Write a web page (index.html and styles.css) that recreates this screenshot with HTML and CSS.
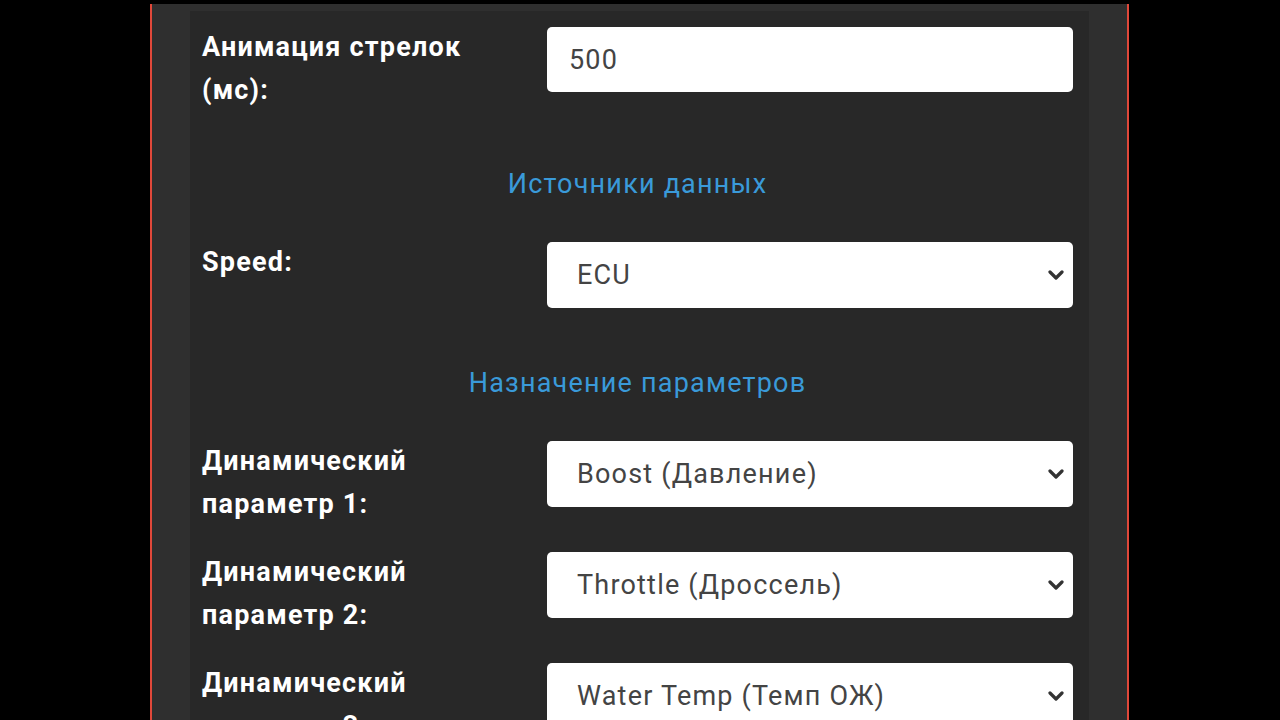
FILE: index.html
```html
<!DOCTYPE html>
<html lang="ru">
<head>
<meta charset="utf-8">
<title>Настройки</title>
<link rel="stylesheet" href="styles.css">
</head>
<body>
<div class="frame">
  <div class="panel">
    <div class="row">
      <label class="label">Анимация стрелок (мс):</label>
      <input class="field input" type="text" value="500">
    </div>

    <h2 class="section">Источники данных</h2>

    <div class="row">
      <label class="label">Speed:</label>
      <div class="select"><span class="select-text">ECU</span>
        <svg class="chev" width="16" height="10" viewBox="0 0 16 10"><path d="M2 2 L8 8 L14 2" fill="none" stroke="#333" stroke-width="3.2" stroke-linecap="round" stroke-linejoin="round"/></svg>
      </div>
    </div>

    <h2 class="section">Назначение параметров</h2>

    <div class="row">
      <label class="label">Динамический параметр 1:</label>
      <div class="select"><span class="select-text">Boost (Давление)</span>
        <svg class="chev" width="16" height="10" viewBox="0 0 16 10"><path d="M2 2 L8 8 L14 2" fill="none" stroke="#333" stroke-width="3.2" stroke-linecap="round" stroke-linejoin="round"/></svg>
      </div>
    </div>
    <div class="row">
      <label class="label">Динамический параметр 2:</label>
      <div class="select"><span class="select-text">Throttle (Дроссель)</span>
        <svg class="chev" width="16" height="10" viewBox="0 0 16 10"><path d="M2 2 L8 8 L14 2" fill="none" stroke="#333" stroke-width="3.2" stroke-linecap="round" stroke-linejoin="round"/></svg>
      </div>
    </div>
    <div class="row">
      <label class="label">Динамический параметр 3:</label>
      <div class="select"><span class="select-text">Water Temp (Темп ОЖ)</span>
        <svg class="chev" width="16" height="10" viewBox="0 0 16 10"><path d="M2 2 L8 8 L14 2" fill="none" stroke="#333" stroke-width="3.2" stroke-linecap="round" stroke-linejoin="round"/></svg>
      </div>
    </div>
  </div>
</div>
</body>
</html>
```
FILE: styles.css
```css
html, body {
  margin: 0;
  padding: 0;
  background: #000;
  height: 720px;
  overflow: hidden;
  font-family: Roboto, "Liberation Sans", sans-serif;
}
.frame {
  margin: 4px 0 0 150px;
  height: 714px;
  background: #2f2f2f;
  border-left: 2px solid #e0483a;
  border-right: 2px solid #e0483a;
  padding: 7px 38px 0 38px;
  box-sizing: content-box;
  width: 899px;
}
.panel {
  background: #282828;
  height: 800px;
  padding: 14px 16px 0 12px;
}
.row {
  display: grid;
  grid-template-columns: 345px 1fr;
  align-items: start;
  margin-bottom: 24px;
}
.label {
  color: #fff;
  font-weight: 700;
  font-size: 27px;
  letter-spacing: 1.2px;
  line-height: 43px;
  padding-top: 1px;
  padding-right: 40px;
}
.field, .select {
  background: #fff;
  border-radius: 5px;
  border: none;
  margin-top: 2px;
  font-family: Roboto, "Liberation Sans", sans-serif;
  font-size: 27px;
  letter-spacing: 1.2px;
  color: #444;
  box-sizing: border-box;
}
.input {
  height: 65px;
  width: 100%;
  padding: 0 22px;
  outline: none;
}
.select {
  height: 66px;
  margin-bottom: 3px;
  position: relative;
  display: flex;
  align-items: center;
  padding: 0 30px;
}
.chev {
  position: absolute;
  right: 9px;
  top: 28px;
}
.section {
  margin: 0;
  padding: 27px 0 34px;
  text-align: center;
  font-weight: 400;
  font-size: 27px;
  letter-spacing: 1.2px;
  line-height: 43px;
  color: #3a9ad9;
}
```
